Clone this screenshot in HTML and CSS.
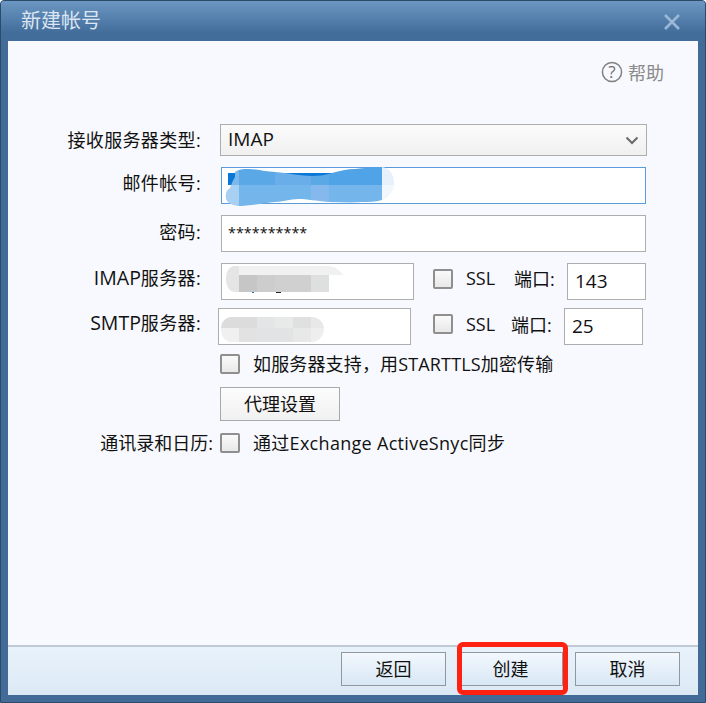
FILE: index.html
```html
<!DOCTYPE html>
<html lang="zh-CN">
<head>
<meta charset="utf-8">
<title>新建帐号</title>
<link rel="stylesheet" href="styles.css">
</head>
<body>
<div class="window">
  <header class="titlebar">
    <span class="title">新建帐号</span>
    <svg class="close" width="18" height="18" viewBox="0 0 18 18"><path d="M2 2 16 16M16 2 2 16" stroke="#9db8d6" stroke-width="2.6" fill="none"/></svg>
  </header>
  <main class="content">
    <div class="help">
      <svg width="22" height="22" viewBox="0 0 22 22"><circle cx="11" cy="11" r="9.6" fill="none" stroke="#808080" stroke-width="1.5"/><text x="11" y="16.5" class="q">?</text></svg>
      <span>帮助</span>
    </div>
    <div class="form">
      <div class="row row-select">
        <label class="lbl">接收服务器类型:</label>
        <div class="select"><span class="val">IMAP</span>
          <svg width="14" height="9" viewBox="0 0 14 9"><path d="M1.5 1.5 7 7l5.5-5.5" fill="none" stroke="#6b6b6b" stroke-width="2"/></svg>
        </div>
      </div>
      <div class="row row-email">
        <label class="lbl">邮件帐号:</label>
        <div class="input wide focus">
          <svg class="mask" width="172" height="42" viewBox="0 0 172 42">
            <defs>
              <clipPath id="blob"><path d="M10 7C14 4 18 4 23 4c10 0 18 3 27 3 14 1 26 4 37 4 8 0 14-1 20-3 8-2 15-4 23-4 9-1 18-2 27-2 8 1 12 8 12 16 0 8-5 15-12 17-7 2-13 2-20 2-12 1-23 0-34 0-12-1-20-3-30-3-8 0-15 3-23 3-11 1-26 4-37 4-7-1-12-4-12-8-1-5 1-8 4-10 1-3 3-8 5-11Z"/></clipPath>
            </defs>
            <path d="M3 8h104v4H3Z" fill="#0a78d6"/>
            <rect x="3" y="8" width="8" height="12" fill="#0a78d6"/>
            <g clip-path="url(#blob)">
              <rect x="0" y="0" width="14" height="20" fill="#7bb8ec"/>
              <rect x="0" y="20" width="14" height="22" fill="#a8d0f3"/>
              <rect x="14" y="0" width="36" height="20" fill="#5ba8e6"/>
              <rect x="14" y="20" width="36" height="22" fill="#74b6ec"/>
              <rect x="50" y="0" width="36" height="20" fill="#69ade9"/>
              <rect x="50" y="20" width="36" height="22" fill="#72b6ec"/>
              <rect x="86" y="0" width="18" height="20" fill="#5aa8e6"/>
              <rect x="86" y="20" width="18" height="22" fill="#85b9ee"/>
              <rect x="104" y="0" width="53" height="20" fill="#50a3e6"/>
              <rect x="104" y="20" width="53" height="22" fill="#74b6ec"/>
              <rect x="157" y="0" width="15" height="20" fill="#e6f1fb"/>
              <rect x="157" y="20" width="15" height="22" fill="#f1f7fd"/>
            </g>
          </svg>
        </div>
      </div>
      <div class="row row-pass">
        <label class="lbl">密码:</label>
        <div class="input wide"><span class="stars">**********</span></div>
      </div>
      <div class="row row-imap">
        <label class="lbl"><span class="en">IMAP</span>服务器:</label>
        <div class="input server">
          <svg class="mask" width="120" height="30" viewBox="0 0 120 30">
            <defs><clipPath id="imapblob"><path d="M10 1h92c8 0 13 4 16 9h-14v17H10C5 27 1 22 1 14S5 1 10 1Z"/></clipPath></defs>
            <g clip-path="url(#imapblob)">
              <rect x="0" y="0" width="120" height="10" fill="#f1f1f1"/>
              <rect x="0" y="0" width="14" height="30" fill="#e5e5e5"/>
              <rect x="14" y="10" width="18" height="20" fill="#c6c6c6"/>
              <rect x="32" y="10" width="18" height="20" fill="#cdcdcd"/>
              <rect x="50" y="10" width="36" height="20" fill="#d0d0d0"/>
              <rect x="86" y="10" width="18" height="20" fill="#dde0df"/>
            </g>
            <rect x="27" y="27" width="2" height="1" fill="#3b6ea8"/>
            <rect x="51" y="27" width="5" height="1" fill="#222"/>
          </svg>
        </div>
        <span class="check ssl-check"></span>
        <span class="ssl">SSL</span>
        <label class="port">端口:</label>
        <div class="input portbox"><span class="val">143</span></div>
      </div>
      <div class="row row-smtp">
        <label class="lbl"><span class="en">SMTP</span>服务器:</label>
        <div class="input server">
          <svg class="mask" width="106" height="27" viewBox="0 0 106 27">
            <defs><clipPath id="smtpblob"><path d="M12 1h80c7 0 12 6 12 12s-5 13-12 13H12C5 26 1 20 1 13S5 1 12 1Z"/></clipPath></defs>
            <g clip-path="url(#smtpblob)">
              <rect x="0" y="0" width="37" height="12" fill="#dcdcdc"/>
              <rect x="37" y="0" width="18" height="12" fill="#e3e5e6"/>
              <rect x="55" y="0" width="18" height="12" fill="#e8eaea"/>
              <rect x="73" y="0" width="18" height="12" fill="#e0e0e0"/>
              <rect x="91" y="0" width="15" height="12" fill="#e8e8e8"/>
              <rect x="0" y="12" width="19" height="15" fill="#f0f0f0"/>
              <rect x="19" y="12" width="18" height="15" fill="#e2e2e2"/>
              <rect x="37" y="12" width="36" height="15" fill="#e1e3e4"/>
              <rect x="73" y="12" width="18" height="15" fill="#e8e8e8"/>
              <rect x="91" y="12" width="15" height="15" fill="#eeeeee"/>
            </g>
          </svg>
        </div>
        <span class="check ssl-check"></span>
        <span class="ssl">SSL</span>
        <label class="port">端口:</label>
        <div class="input portbox"><span class="val">25</span></div>
      </div>
      <div class="row row-tls">
        <span class="check"></span>
        <span class="opt">如服务器支持，用STARTTLS加密传输</span>
      </div>
      <div class="row row-proxy">
        <button class="btn proxy">代理设置</button>
      </div>
      <div class="row row-sync">
        <label class="lbl">通讯录和日历:</label>
        <span class="check"></span>
        <span class="opt">通过Exchange ActiveSnyc同步</span>
      </div>
    </div>
  </main>
  <footer class="footer">
    <button class="btn foot">返回</button>
    <button class="btn foot primary">创建<span class="marker"></span></button>
    <button class="btn foot">取消</button>
  </footer>
</div>
</body>
</html>
```
FILE: styles.css
```css
* { box-sizing: border-box; }
html, body { margin: 0; padding: 0; height: 100%; }
body {
  background: #fff;
  font-family: "Open Sans", "Noto Sans CJK SC", sans-serif;
  font-size: 18px;
  color: #111;
  overflow: hidden;
}
.window {
  width: 706px;
  height: 703px;
  display: flex;
  flex-direction: column;
  background: #426b98;
  border: 1px solid #2c4a6a;
  border-radius: 4px 4px 0 0;
  padding: 0 7px 7px;
}
.titlebar {
  height: 40px;
  margin: 0 -7px;
  padding: 0 24px 3px 20px;
  display: flex;
  align-items: center;
  justify-content: space-between;
  background: linear-gradient(#6c97c2, #426c9a 80%);
  border-radius: 3px 3px 0 0;
  flex: none;
}
.title {
  font-size: 20px;
  color: #dbe6f2;
}
.close { margin-top: 5px; }
.content {
  flex: 1;
  background: #f8f9fe;
  padding: 20px 34px 0 0;
  min-height: 0;
}
.help {
  display: flex;
  justify-content: flex-end;
  align-items: center;
  gap: 4px;
  height: 22px;
  color: #8a8a8a;
  font-size: 18px;
}
.help svg { margin-right: 1px; }
.q { font: 17px "Open Sans", sans-serif; fill: #6f6f6f; text-anchor: middle; }
.form { margin-top: 41px; }
.row { display: flex; align-items: center; position: relative; }
.lbl {
  width: 201px;
  padding: 0 8px 2px 0;
  text-align: right;
  white-space: nowrap;
  flex: none;
  letter-spacing: .35px;
}
.en { font-size: 19.5px; letter-spacing: 0; }
.select {
  width: 427px;
  height: 32px;
  margin-left: 11px;
  border: 1px solid #adadad;
  background: linear-gradient(#fbfbfb, #f0f0f0);
  display: flex;
  align-items: center;
  justify-content: space-between;
  padding: 0 7px;
}
.val { font-size: 19px; padding-bottom: 2px; }
.row-select { height: 32px; }
.row-email { margin-top: 11px; height: 37px; }
.row-pass { margin-top: 11px; height: 37px; }
.row-imap { margin-top: 11px; height: 37px; }
.row-smtp { margin-top: 8px; height: 37px; }
.row-tls { margin-top: 9px; padding-left: 212px; height: 20px; }
.row-proxy { margin-top: 13px; padding-left: 212px; }
.row-sync { margin-top: 12px; height: 20px; }
.row-sync .lbl { width: 205px; padding-right: 0; letter-spacing: 0; }
.row-sync .check { margin-left: 7px; }
.row-email .lbl, .row-imap .lbl, .row-smtp .lbl { padding-bottom: 8px; }
.row-pass .lbl { padding-bottom: 6px; }
.input {
  position: relative;
  height: 37px;
  background: #fff;
  border: 1px solid #adadad;
  display: flex;
  align-items: center;
  padding: 0 6px;
  flex: none;
}
.wide { width: 425px; margin-left: 12px; }
.focus { border-color: #5a9bd9; }
.stars { font-size: 14.4px; padding-bottom: 3px; }
.server { width: 193px; margin-left: 12px; }
.row-smtp .server { margin-left: 9px; }
.mask { position: absolute; left: 3px; top: 0; pointer-events: none; overflow: visible; }
.row-email .mask { left: 3px; top: -3px; }
.row-imap .mask { left: 3px; top: 1px; }
.row-smtp .mask { left: 1px; top: 7px; }
.check {
  flex: none;
  width: 20px;
  height: 20px;
  border: 2px solid #8f8f8f;
  border-radius: 2px;
  background: linear-gradient(#fafafa, #e8e8e8);
}
.ssl-check { margin-left: 19px; margin-bottom: 5px; }
.ssl { margin-left: 13px; width: 48px; padding-bottom: 8px; }
.port { white-space: nowrap; width: 53px; flex: none; padding-bottom: 8px; }
.row-smtp .ssl-check { margin-left: 22px; }
.row-smtp .ssl { width: 45px; padding-bottom: 6px; }
.row-smtp .port { padding-bottom: 6px; }
.portbox { width: 79px; padding: 0 7px; }
.opt { margin-left: 13px; white-space: nowrap; letter-spacing: .15px; padding-bottom: 2px; }
.row-sync .opt { letter-spacing: .3px; }
.btn {
  font: inherit;
  color: #111;
  border: 1px solid #a9a9a9;
  padding: 0 0 2px;
  cursor: default;
}
.proxy {
  width: 120px;
  height: 34px;
  background: linear-gradient(#fcfcfc, #f1f1f1);
}
.footer {
  flex: none;
  height: 50px;
  border-top: 2px solid #c0c9d6;
  background: linear-gradient(#e8f2fb, #dce9f5);
  display: flex;
  justify-content: flex-end;
  align-items: flex-start;
  gap: 12px;
  padding: 5px 18px 0 0;
}
.foot {
  width: 105px;
  height: 34px;
  background: linear-gradient(#f3f8fd, #d8e7f5);
  border-color: #8f979f;
  position: relative;
}
.marker {
  position: absolute;
  left: -2px;
  top: -11px;
  width: 111px;
  height: 53px;
  border: 5px solid #ff2213;
  border-radius: 6px;
  pointer-events: none;
}
```
